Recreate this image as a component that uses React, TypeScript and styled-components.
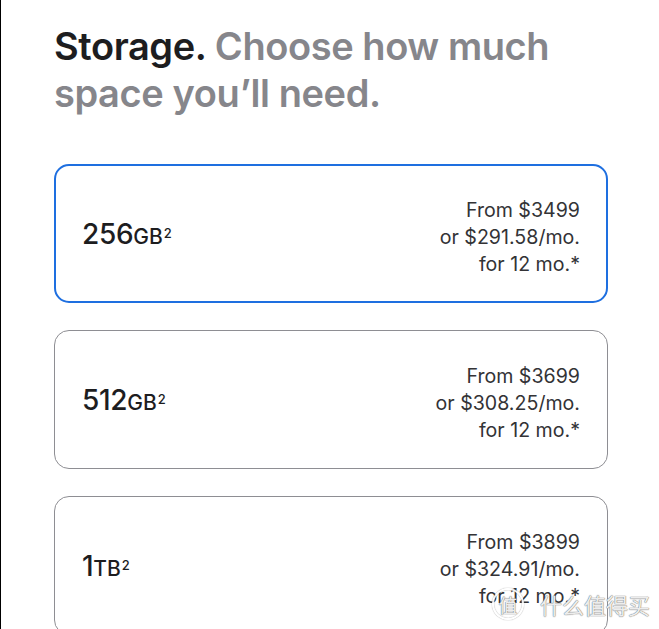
import React from 'react'
import styled, { createGlobalStyle } from 'styled-components'

const GlobalStyle = createGlobalStyle`
  html, body {
    margin: 0;
    padding: 0;
    background: #fff;
    overflow: hidden;
  }
  body {
    font-family: Inter, 'Noto Sans', 'Liberation Sans', sans-serif;
    color: #1d1d1f;
    -webkit-font-smoothing: antialiased;
  }
`

const Page = styled.div`
  position: relative;
  height: 629px;
  overflow: hidden;
  border-left: 1px solid #000;
  padding: 23px 51px 0 53px;
  box-sizing: border-box;
`
const Heading = styled.h2`
  margin: 0 0 47px;
  font-size: 38px;
  line-height: 47px;
  font-weight: 600;
  letter-spacing: -0.42px;
  color: #86868b;
`
const Strong = styled.span`
  color: #1d1d1f;
`
const List = styled.div`
  display: flex;
  flex-direction: column;
  gap: 27px;
`
const Card = styled.div<{ $selected?: boolean }>`
  display: flex;
  align-items: center;
  justify-content: space-between;
  height: 139px;
  box-sizing: border-box;
  padding: 8px ${p => (p.$selected ? 26 : 27)}px 0;
  border: ${p => (p.$selected ? '2.5px solid #1e6fe0' : '1.5px solid #8e8e93')};
  border-radius: 15px;
  flex-shrink: 0;
`
const Size = styled.div`
  display: flex;
  align-items: baseline;
  font-size: 28px;
  font-weight: 500;
  letter-spacing: -0.3px;
  margin-top: -8px;
`
const Unit = styled.span`
  font-size: 21px;
  letter-spacing: 0;
`
const Sup = styled.sup`
  font-size: 13px;
  line-height: 0;
  position: relative;
  top: -6px;
  margin-left: 1px;
`
const Price = styled.div`
  text-align: right;
  font-size: 19.6px;
  line-height: 27px;
  color: #333336;
`
const Watermark = styled.div`
  position: absolute;
  right: 9px;
  bottom: 9px;
  display: flex;
  align-items: center;
  gap: 16px;
  font-family: 'Noto Sans CJK SC', sans-serif;
  color: rgba(255, 255, 255, 0.9);
  text-shadow: 0 0 1px #6e6e6e, 0 0 1px #6e6e6e;
  font-size: 22px;
  pointer-events: none;
`
const Badge = styled.span`
  display: inline-flex;
  align-items: center;
  justify-content: center;
  width: 28px;
  height: 28px;
  border-radius: 50%;
  border: 2px solid rgba(255, 255, 255, 0.9);
  box-shadow: 0 0 1px #6e6e6e, inset 0 0 1px #6e6e6e;
  font-size: 19px;
`

type Option = {
  amount: string
  unit: string
  from: string
  monthly: string
  selected?: boolean
}

const options: Option[] = [
  { amount: '256', unit: 'GB', from: '$3499', monthly: '$291.58', selected: true },
  { amount: '512', unit: 'GB', from: '$3699', monthly: '$308.25' },
  { amount: '1', unit: 'TB', from: '$3899', monthly: '$324.91' },
]

function App() {
  return (
    <Page>
      <GlobalStyle />
      <Heading>
        <Strong>Storage.</Strong> Choose how much space you’ll need.
      </Heading>
      <List>
        {options.map(o => (
          <Card key={o.amount + o.unit} $selected={o.selected}>
            <Size>
              {o.amount}
              <Unit>{o.unit}</Unit>
              <Sup>2</Sup>
            </Size>
            <Price>
              From {o.from}
              <br />
              or {o.monthly}/mo.
              <br />
              for 12 mo.*
            </Price>
          </Card>
        ))}
      </List>
      <Watermark>
        <Badge>值</Badge>
        什么值得买
      </Watermark>
    </Page>
  )
}

export default App
